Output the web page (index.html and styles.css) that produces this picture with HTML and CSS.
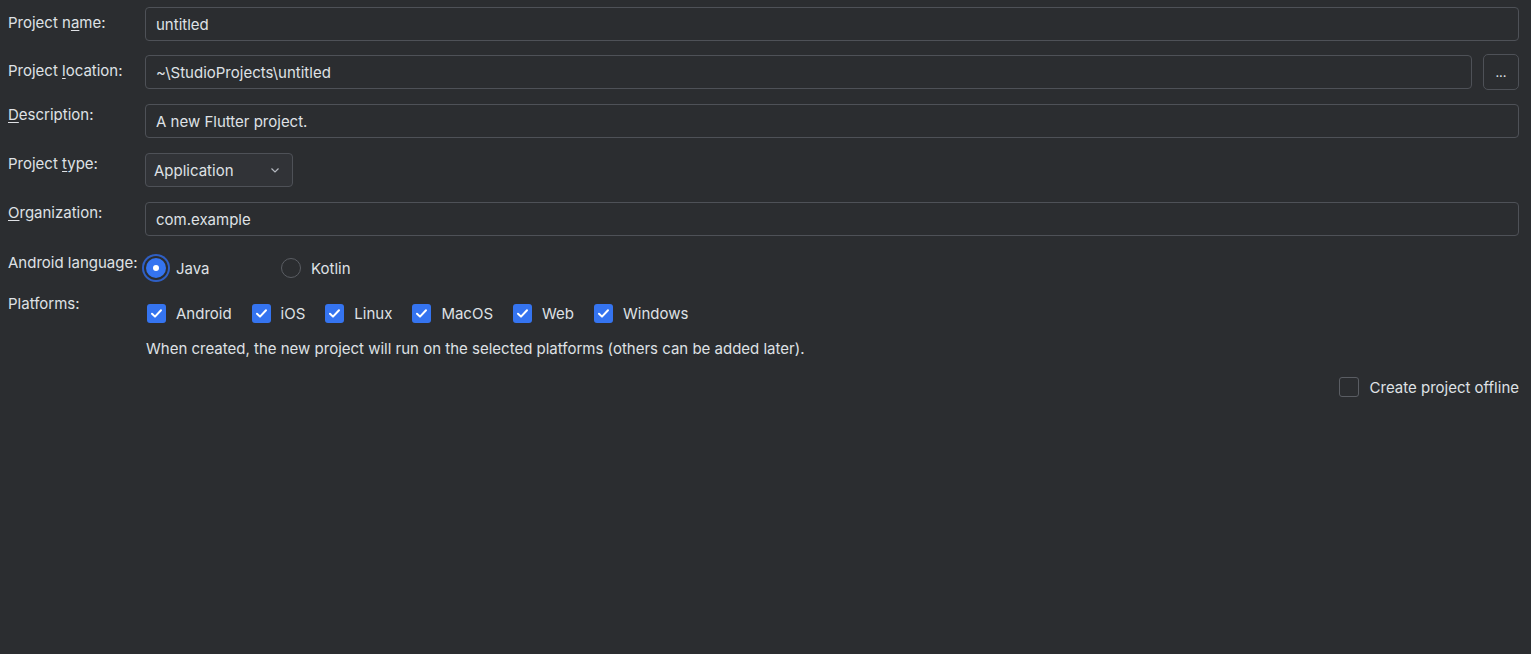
FILE: index.html
```html
<!DOCTYPE html>
<html lang="en">
<head>
  <meta charset="UTF-8">
  <title>New Flutter Project</title>
  <link rel="stylesheet" href="styles.css">
</head>
<body>
  <div class="form">
    <div class="row first">
      <label class="label center">Project n<u>a</u>me:</label>
      <input class="field" type="text" value="untitled">
    </div>

    <div class="row">
      <label class="label center">Project <u>l</u>ocation:</label>
      <input class="field" type="text" value="~\StudioProjects\untitled">
      <button class="browse">...</button>
    </div>

    <div class="row">
      <label class="label"><u>D</u>escription:</label>
      <input class="field" type="text" value="A new Flutter project.">
    </div>

    <div class="row">
      <label class="label">Project <u>t</u>ype:</label>
      <div class="select">
        <span>Application</span>
        <svg width="12" height="12" viewBox="0 0 12 12"><path d="M2.5 4.5 L6 8 L9.5 4.5" fill="none" stroke="#b4b8bf" stroke-width="1.2"/></svg>
      </div>
    </div>

    <div class="row">
      <label class="label"><u>O</u>rganization:</label>
      <input class="field" type="text" value="com.example">
    </div>

    <div class="row radios">
      <label class="label">Android language:</label>
      <div class="option java">
        <span class="radio checked"></span>
        <span>Java</span>
      </div>
      <div class="option">
        <span class="radio"></span>
        <span>Kotlin</span>
      </div>
    </div>

    <div class="row checks">
      <label class="label">Platforms:</label>
      <div class="platforms">
        <div class="option"><span class="check on"></span><span>Android</span></div>
        <div class="option"><span class="check on"></span><span>iOS</span></div>
        <div class="option"><span class="check on"></span><span>Linux</span></div>
        <div class="option"><span class="check on"></span><span>MacOS</span></div>
        <div class="option"><span class="check on"></span><span>Web</span></div>
        <div class="option"><span class="check on"></span><span>Windows</span></div>
      </div>
    </div>

    <p class="hint">When created, the new project will run on the selected platforms (others can be added later).</p>

    <div class="offline">
      <div class="option"><span class="check"></span><span>Create project offline</span></div>
    </div>
  </div>
</body>
</html>
```

FILE: styles.css
```css
body, html {
  margin: 0;
  padding: 0;
  background-color: #2b2d30;
  color: #dfe1e5;
  font-family: Inter, "Noto Sans", sans-serif;
  font-size: 15px;
  height: 100%;
}

.form {
  padding: 7px 12px 0 8px;
}

.row {
  display: flex;
  align-items: flex-start;
  margin-bottom: 15px;
}
.row.first {
  margin-bottom: 14px;
}

.label {
  width: 137px;
  flex-shrink: 0;
  line-height: 18px;
  padding-top: 2px;
  white-space: nowrap;
}
.label.center {
  padding-top: 7px;
}
.label u {
  text-underline-offset: 2px;
}

.field {
  flex: 1;
  height: 34px;
  box-sizing: border-box;
  background-color: #2b2d30;
  border: 1px solid #4e5157;
  border-radius: 4px;
  color: #dfe1e5;
  font-family: inherit;
  font-size: 15px;
  padding: 0 10px;
  outline: none;
}

.browse {
  width: 36px;
  height: 36px;
  margin: -1px 0 -1px 11px;
  box-sizing: border-box;
  background-color: #2b2d30;
  border: 1px solid #4e5157;
  border-radius: 5px;
  color: #dfe1e5;
  font-family: inherit;
  font-size: 13px;
  padding: 0;
}

.select {
  width: 148px;
  height: 34px;
  box-sizing: border-box;
  display: flex;
  align-items: center;
  justify-content: space-between;
  padding: 0 11px 0 8px;
  background-color: #313337;
  border: 1px solid #4e5157;
  border-radius: 4px;
}

.option {
  display: flex;
  align-items: center;
  gap: 10px;
}

.radios {
  margin-top: 19px;
  margin-bottom: 14px;
}
.radios .label {
  padding-top: 0;
  margin-top: -1px;
}
.radios .option {
  gap: 7px;
}
.radios .java {
  width: 135px;
  margin-left: -2px;
}

.radio {
  width: 20px;
  height: 20px;
  box-sizing: border-box;
  border: 1px solid #5a5d63;
  border-radius: 50%;
  display: inline-block;
  margin: 3px;
}
.radio.checked {
  background-color: #3574f0;
  border: none;
  box-shadow: 0 0 0 2px #2b2d30, 0 0 0 4px #2f5fc4;
  position: relative;
}
.radio.checked::after {
  content: "";
  position: absolute;
  left: 7px;
  top: 7px;
  width: 6px;
  height: 6px;
  border-radius: 50%;
  background-color: #ffffff;
}

.checks .label {
  padding-top: 0;
}

.platforms {
  display: flex;
  gap: 20px;
  padding-top: 9px;
  margin-left: 2px;
}

.check {
  width: 19px;
  height: 19px;
  box-sizing: border-box;
  border: 1px solid #5a5d63;
  border-radius: 3px;
  display: inline-block;
}
.check.on {
  border: none;
  background-color: #3574f0;
  background-image: url("data:image/svg+xml;utf8,<svg xmlns='http://www.w3.org/2000/svg' width='19' height='19' viewBox='0 0 19 19'><path d='M5 9.7 L8 12.6 L14 6.2' fill='none' stroke='white' stroke-width='2' stroke-linecap='round' stroke-linejoin='round'/></svg>");
}

.hint {
  margin: 0 0 0 138px;
  padding-top: 2px;
  line-height: 18px;
}

.offline {
  display: flex;
  justify-content: flex-end;
  margin-top: 19px;
}
.offline .option {
  gap: 11px;
}
.offline .check {
  width: 20px;
  height: 20px;
}
```
